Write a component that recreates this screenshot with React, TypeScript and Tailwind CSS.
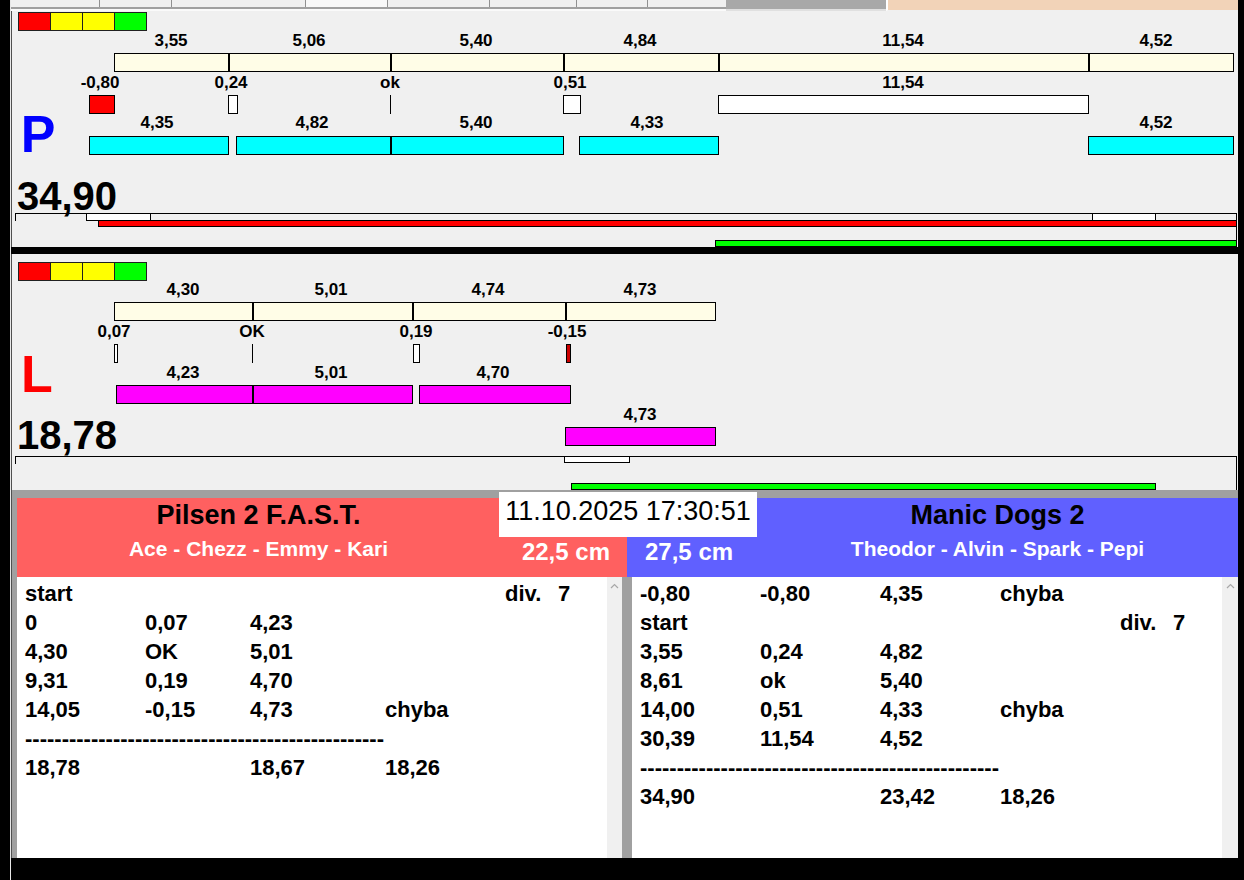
import React from "react";

// page coordinates are used for the timing canvas, panel origin x = 12
type Rect = { x1: number; x2: number; y1: number; y2: number; bg: string; divs?: number[] };
type Seg = [number, number, number, number];
type Label = [number, number, string];

const OX = 12;

const pRects: Rect[] = [
  { x1: 114, x2: 1233, y1: 53, y2: 71, bg: "bg-[#fffde7]", divs: [228, 390, 563, 718, 1088] },
  { x1: 89, x2: 114, y1: 95, y2: 113, bg: "bg-[#ff0000]" },
  { x1: 228, x2: 237, y1: 95, y2: 113, bg: "bg-white" },
  { x1: 563, x2: 580, y1: 95, y2: 113, bg: "bg-white" },
  { x1: 718, x2: 1088, y1: 95, y2: 113, bg: "bg-white" },
  { x1: 89, x2: 228, y1: 136, y2: 154, bg: "bg-[#00ffff]" },
  { x1: 236, x2: 563, y1: 136, y2: 154, bg: "bg-[#00ffff]", divs: [390] },
  { x1: 579, x2: 718, y1: 136, y2: 154, bg: "bg-[#00ffff]" },
  { x1: 1088, x2: 1233, y1: 136, y2: 154, bg: "bg-[#00ffff]" },
  { x1: 86, x2: 150, y1: 213, y2: 220, bg: "bg-white" },
  { x1: 1092, x2: 1155, y1: 213, y2: 220, bg: "bg-white" },
  { x1: 98, x2: 1236, y1: 220, y2: 226, bg: "bg-[#ff0000]" },
  { x1: 715, x2: 1236, y1: 240, y2: 246, bg: "bg-[#00ff00]" },
];

const pLines: Seg[] = [
  [390, 390, 95, 113],
  [15, 1236, 213, 213],
  [15, 15, 213, 220],
  [1236, 1236, 213, 246],
];

const pLabels: Label[] = [
  [171, 40, "3,55"],
  [309, 40, "5,06"],
  [476, 40, "5,40"],
  [640, 40, "4,84"],
  [903, 40, "11,54"],
  [1156, 40, "4,52"],
  [100, 82, "-0,80"],
  [231, 82, "0,24"],
  [390, 82, "ok"],
  [570, 82, "0,51"],
  [903, 82, "11,54"],
  [157, 122, "4,35"],
  [312, 122, "4,82"],
  [476, 122, "5,40"],
  [647, 122, "4,33"],
  [1156, 122, "4,52"],
];

const lRects: Rect[] = [
  { x1: 114, x2: 715, y1: 302, y2: 320, bg: "bg-[#fffde7]", divs: [252, 412, 565] },
  { x1: 114, x2: 117, y1: 344, y2: 362, bg: "bg-white" },
  { x1: 413, x2: 419, y1: 344, y2: 362, bg: "bg-white" },
  { x1: 566, x2: 570, y1: 344, y2: 362, bg: "bg-[#cc0000]" },
  { x1: 116, x2: 412, y1: 385, y2: 403, bg: "bg-[#ff00ff]", divs: [252] },
  { x1: 419, x2: 570, y1: 385, y2: 403, bg: "bg-[#ff00ff]" },
  { x1: 565, x2: 715, y1: 427, y2: 445, bg: "bg-[#ff00ff]" },
  { x1: 564, x2: 629, y1: 456, y2: 462, bg: "bg-white" },
  { x1: 571, x2: 1155, y1: 483, y2: 489, bg: "bg-[#00ff00]" },
];

const lLines: Seg[] = [
  [252, 252, 344, 362],
  [15, 1236, 456, 456],
  [15, 15, 456, 463],
  [1236, 1236, 456, 490],
];

const lLabels: Label[] = [
  [183, 289, "4,30"],
  [331, 289, "5,01"],
  [488, 289, "4,74"],
  [640, 289, "4,73"],
  [114, 331, "0,07"],
  [252, 331, "OK"],
  [416, 331, "0,19"],
  [567, 331, "-0,15"],
  [183, 372, "4,23"],
  [331, 372, "5,01"],
  [493, 372, "4,70"],
  [640, 414, "4,73"],
];

function Canvas({
  oy,
  legendY,
  rects,
  lines,
  labels,
  letter,
  letterColor,
  letterCx,
  letterCy,
  total,
  totalCy,
}: {
  oy: number;
  legendY: number;
  rects: Rect[];
  lines: Seg[];
  labels: Label[];
  letter: string;
  letterColor: string;
  letterCx: number;
  letterCy: number;
  total: string;
  totalCy: number;
}) {
  return (
    <div className="relative h-[236px] bg-[#f0f0f0] border-l border-l-[#505050] overflow-hidden">
      <div className="absolute flex border border-[#202020]" style={{ left: 18 - OX, top: legendY - oy }}>
        <div className="w-[31px] h-[17px] bg-[#ff0000]" />
        <div className="w-[32px] h-[17px] bg-[#ffff00] border-l border-[#202020]" />
        <div className="w-[32px] h-[17px] bg-[#ffff00] border-l border-[#202020]" />
        <div className="w-[32px] h-[17px] bg-[#00ff00] border-l border-[#202020]" />
      </div>

      {rects.map((r, i) => (
        <div
          key={i}
          className={`absolute border border-black ${r.bg}`}
          style={{ left: r.x1 - OX, top: r.y1 - oy, width: r.x2 - r.x1 + 1, height: r.y2 - r.y1 + 1 }}
        >
          {r.divs?.map((d) => (
            <div key={d} className="absolute top-0 bottom-0 w-[2px] bg-black" style={{ left: d - r.x1 - 1 }} />
          ))}
        </div>
      ))}

      {lines.map(([x1, x2, y1, y2], i) => (
        <div
          key={i}
          className="absolute bg-black"
          style={{ left: x1 - OX, top: y1 - oy, width: x2 - x1 + 1, height: y2 - y1 + 1 }}
        />
      ))}

      {labels.map(([cx, cy, t], i) => (
        <div
          key={i}
          className="absolute -translate-x-1/2 -translate-y-1/2 whitespace-nowrap text-[17px] font-bold leading-none text-black"
          style={{ left: cx - OX, top: cy - oy }}
        >
          {t}
        </div>
      ))}

      <div
        className={`absolute -translate-x-1/2 -translate-y-1/2 text-[52px] font-bold leading-none ${letterColor}`}
        style={{ left: letterCx - OX, top: letterCy - oy }}
      >
        {letter}
      </div>
      <div
        className="absolute -translate-x-1/2 -translate-y-1/2 text-[40px] font-bold leading-none text-black"
        style={{ left: 67 - OX, top: totalCy - oy }}
      >
        {total}
      </div>
    </div>
  );
}

const DASHES = "-------------------------------------------------";

function StartRow() {
  return (
    <div className="flex h-[29px]">
      <span className="w-[480px]">start</span>
      <span className="w-[53px]">div.</span>
      <span>7</span>
    </div>
  );
}

function Scrollbar({ wide }: { wide?: boolean }) {
  return (
    <div className={`${wide ? "w-[16px]" : "w-[15px]"} h-full bg-[#f0f0f0] flex justify-center pt-[6px]`}>
      <svg width="9" height="6" viewBox="0 0 9 6">
        <path d="M1 5 L4.5 1.5 L8 5" fill="none" stroke="#a8a8a8" strokeWidth="1.2" />
      </svg>
    </div>
  );
}

const leftRows: string[][] = [
  ["0", "0,07", "4,23", ""],
  ["4,30", "OK", "5,01", ""],
  ["9,31", "0,19", "4,70", ""],
  ["14,05", "-0,15", "4,73", "chyba"],
];

const rightRows: string[][] = [
  ["3,55", "0,24", "4,82", ""],
  ["8,61", "ok", "5,40", ""],
  ["14,00", "0,51", "4,33", "chyba"],
  ["30,39", "11,54", "4,52", ""],
];

export default function App() {
  return (
    <div className="w-[1244px] h-[880px] bg-black flex overflow-hidden font-['Liberation_Sans',Arial,sans-serif]">
      <div className="w-[10px] shrink-0" />
      <div className="w-[1228px] shrink-0 flex flex-col border-l border-l-[#e8e8e8]">
        {/* tab strip, mostly hidden */}
        <div className="flex h-[11px]">
          <div className="w-[715px] flex flex-col">
            <div className="flex h-[7px] bg-[#f0f0f0]">
              <div className="w-[89px] border-r border-r-[#909090]" />
              <div className="w-[72px] border-r border-r-[#909090]" />
              <div className="w-[134px] border-r border-r-[#909090]" />
              <div className="w-[82px] border-r border-r-[#909090] bg-[#f8f8f8]" />
              <div className="w-[102px] border-r border-r-[#909090]" />
              <div className="w-[87px] border-r border-r-[#909090]" />
              <div className="w-[71px] border-r border-r-[#909090]" />
              <div className="w-[78px]" />
            </div>
            <div className="h-[2px] bg-[#a0a0a0]" />
            <div className="h-[2px] bg-[#fafafa]" />
          </div>
          <div className="w-[160px] bg-[#a8a8a8] border-b-2 border-b-[#e0e0e0]" />
          <div className="flex-1 bg-[#f2d3b8] border-l-2 border-l-white border-b border-b-[#f0f0f0]" />
        </div>

        <Canvas
          oy={11}
          legendY={12}
          rects={pRects}
          lines={pLines}
          labels={pLabels}
          letter="P"
          letterColor="text-[#0000ff]"
          letterCx={38}
          letterCy={134}
          total="34,90"
          totalCy={196}
        />
        <div className="h-[7px] bg-black" />
        <Canvas
          oy={254}
          legendY={262}
          rects={lRects}
          lines={lLines}
          labels={lLabels}
          letter="L"
          letterColor="text-[#ff0000]"
          letterCx={37}
          letterCy={374}
          total="18,78"
          totalCy={435}
        />
        <div className="h-[7px] bg-[#a0a0a0] border-l border-l-[#505050]" />

        {/* results */}
        <div className="relative h-[361px] bg-[#a0a0a0] border-l border-l-[#505050] pl-[5px] pt-[1px] flex flex-col">
          <div className="absolute z-10 left-[487px] top-[-5px] w-[258px] h-[45px] bg-white text-center text-[27px] leading-[38px] text-black whitespace-nowrap">
            11.10.2025 17:30:51
          </div>

          <div className="flex h-[79px]">
            <div className="w-[610px] bg-[#ff6060] flex">
              <div className="w-[483px] flex flex-col items-center pt-[2px]">
                <div className="text-[27px] font-bold leading-[30px] text-black">Pilsen 2 F.A.S.T.</div>
                <div className="mt-[7px] text-[21px] font-bold leading-[24px] text-white">Ace - Chezz - Emmy - Kari</div>
              </div>
              <div className="flex-1 flex items-end justify-end pr-[17px] pb-[11px]">
                <span className="text-[24px] font-bold leading-[28px] text-white">22,5 cm</span>
              </div>
            </div>
            <div className="w-[611px] bg-[#6060ff] flex">
              <div className="w-[130px] flex items-end pl-[18px] pb-[11px]">
                <span className="text-[24px] font-bold leading-[28px] text-white">27,5 cm</span>
              </div>
              <div className="flex-1 flex flex-col items-center pt-[2px]">
                <div className="text-[27px] font-bold leading-[30px] text-black">Manic Dogs 2</div>
                <div className="mt-[7px] text-[21px] font-bold leading-[24px] text-white">Theodor - Alvin - Spark - Pepi</div>
              </div>
            </div>
          </div>

          <div className="flex h-[281px]">
            <div className="w-[605px] flex">
              <div className="w-[590px] bg-white pl-[8px] pt-[2px] text-[22px] font-bold leading-[29px] text-black">
                <StartRow />
                {leftRows.map((r, i) => (
                  <div key={i} className="grid grid-cols-[120px_105px_135px_1fr] h-[29px]">
                    {r.map((c, j) => (
                      <span key={j}>{c}</span>
                    ))}
                  </div>
                ))}
                <div className="h-[29px] whitespace-nowrap">{DASHES}</div>
                <div className="grid grid-cols-[120px_105px_135px_1fr] h-[29px]">
                  <span>18,78</span>
                  <span></span>
                  <span>18,67</span>
                  <span>18,26</span>
                </div>
              </div>
              <Scrollbar />
            </div>
            <div className="w-[10px]" />
            <div className="w-[606px] flex">
              <div className="w-[590px] bg-white pl-[8px] pt-[2px] text-[22px] font-bold leading-[29px] text-black">
                <div className="grid grid-cols-[120px_120px_120px_1fr] h-[29px]">
                  <span>-0,80</span>
                  <span>-0,80</span>
                  <span>4,35</span>
                  <span>chyba</span>
                </div>
                <StartRow />
                {rightRows.map((r, i) => (
                  <div key={i} className="grid grid-cols-[120px_120px_120px_1fr] h-[29px]">
                    {r.map((c, j) => (
                      <span key={j}>{c}</span>
                    ))}
                  </div>
                ))}
                <div className="h-[29px] whitespace-nowrap">{DASHES}</div>
                <div className="grid grid-cols-[120px_120px_120px_1fr] h-[29px]">
                  <span>34,90</span>
                  <span></span>
                  <span>23,42</span>
                  <span>18,26</span>
                </div>
              </div>
              <Scrollbar wide />
            </div>
          </div>
        </div>
      </div>
      <div className="w-[6px] shrink-0" />
    </div>
  );
}
